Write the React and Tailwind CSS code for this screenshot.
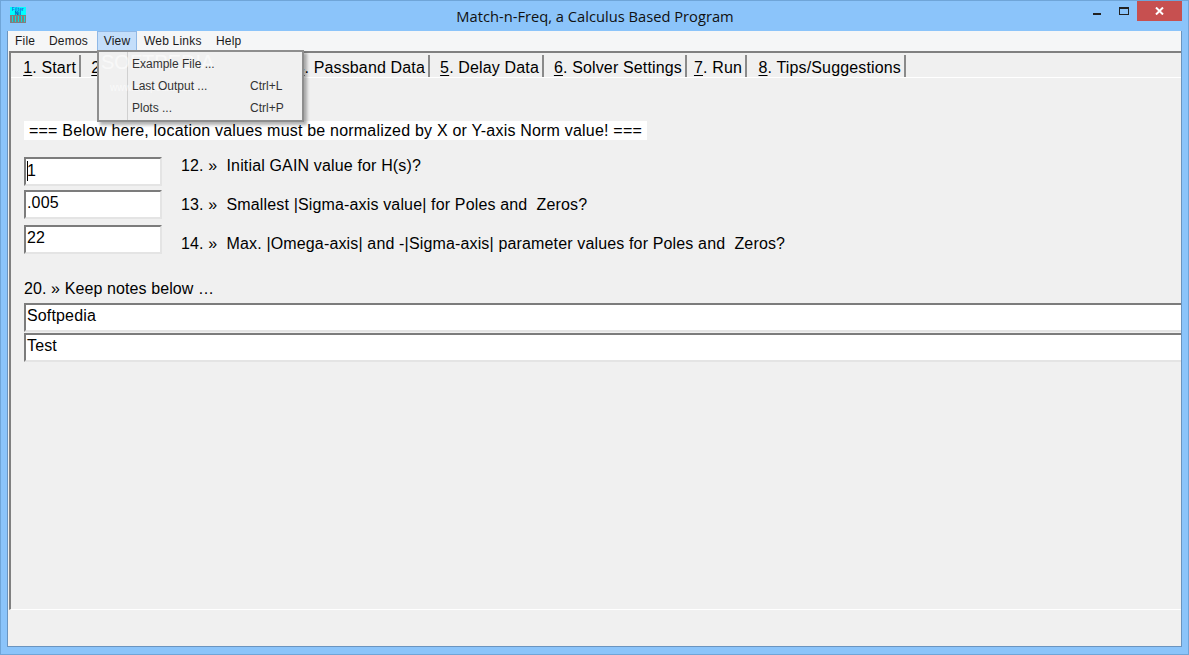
const font = { fontFamily: '"Liberation Sans", Arial, sans-serif' };

const tabs = [
    { num: '1', label: '. Start', width: 'w-[70px]' },
    { num: '2', label: '. Filter', width: 'w-[70px]' },
    { num: '3', label: '. Stopband Data', width: 'w-[132px]' },
    { num: '4', label: '. Passband Data', width: 'w-[147px]' },
    { num: '5', label: '. Delay Data', width: 'w-[114px]' },
    { num: '6', label: '. Solver Settings', width: 'w-[143px]' },
    { num: '7', label: '. Run', width: 'w-[60px]' },
    { num: '8', label: '. Tips/Suggestions', width: 'w-[159px]' },
];

function TabItem({ num, label, width }) {
    return (
        <div className={`${width} h-[22px] flex items-center justify-end pr-[3px] border-r-2 border-r-[#8a8a8a] whitespace-pre`}>
            <span className="mt-[4px]"><span className="underline underline-offset-2">{num}</span>{label}</span>
        </div>
    );
}

function Field({ value, caret, className = '' }) {
    return (
        <div className={`relative border-2 border-t-[#7c7c7c] border-l-[#7c7c7c] border-r-[#e4e4e4] border-b-[#e4e4e4] bg-white pl-[1px] leading-[20px] ${className}`}>
            {caret && <div className="absolute left-[1px] top-[2px] w-[1px] h-[20px] bg-black" />}
            {value}
        </div>
    );
}

function MenuRow({ label, shortcut }) {
    return (
        <div className="h-[22px] flex items-center pl-[33px] text-[12px] text-[#333]">
            <span className="w-[118px]">{label}</span>
            <span>{shortcut}</span>
        </div>
    );
}

function ViewMenu() {
    return (
        <div className="absolute left-0 top-[19px] w-[207px] h-[72px] pt-[1px] bg-[#f0f0f0] border-2 border-[#8e8e8e] shadow-[3px_3px_3px_rgba(0,0,0,0.3)] z-20 tracking-normal">
            <div className="absolute left-[28px] top-0 bottom-0 w-[1px] bg-[#d0d0d0]" />
            <div className="absolute left-[2px] top-0 text-[20px] leading-[20px] text-white/60 whitespace-nowrap">SOFTPEDIA</div>
            <div className="absolute left-[11px] top-[28px] text-[10px] text-white/60 whitespace-nowrap">www.softpedia.com</div>
            <div className="relative">
                <MenuRow label="Example File ..." />
                <MenuRow label="Last Output ..." shortcut="Ctrl+L" />
                <MenuRow label="Plots ..." shortcut="Ctrl+P" />
            </div>
        </div>
    );
}

export default function App() {
    return (
        <div style={font} className="w-[1189px] h-[655px] flex flex-col bg-[#8bc4fa] border border-[#6fa5d8] overflow-hidden text-black text-[16px] tracking-[0.15px]">
            {/* Title bar */}
            <div className="h-[30px] shrink-0 flex items-start">
                <svg className="ml-[9px] mt-[6px]" width="17" height="17" viewBox="0 0 17 17">
                    <rect x="0" y="0" width="16" height="8" fill="#00ffff" />
                    <text x="8" y="4" textAnchor="middle" fontSize="4.5" fontWeight="bold" fill="#2060e0">Filter</text>
                    <text x="8" y="8" textAnchor="middle" fontSize="4.5" fontWeight="bold" fill="#1040b0">Nil</text>
                    <rect x="0" y="8" width="16" height="8" fill="#808080" />
                    <rect x="2" y="9" width="1" height="6" fill="#00e0e0" />
                    <rect x="5" y="9" width="1" height="6" fill="#00e0e0" />
                    <rect x="8" y="9" width="1" height="6" fill="#00e0e0" />
                    <rect x="11" y="9" width="1" height="6" fill="#00e0e0" />
                    <rect x="14" y="9" width="1" height="6" fill="#00e0e0" />
                </svg>
                <div style={{ fontFamily: '"Open Sans", sans-serif' }} className="flex-1 text-center text-[14.7px] tracking-normal leading-[30px] text-[#111] pl-[70px]">
                    Match-n-Freq, a Calculus Based Program
                </div>
                <div className="w-[8px] h-[2px] mt-[12px] bg-[#222]" />
                <div className="w-[10px] h-[8px] mt-[6px] ml-[18px] border border-t-2 border-[#222]" />
                <div className="w-[45px] h-[20px] ml-[8px] mr-[6px] bg-[#c75050] flex items-center justify-center">
                    <svg width="9" height="8" viewBox="0 0 9 8">
                        <path d="M1 0.5 L8 7.5 M8 0.5 L1 7.5" stroke="#fff" strokeWidth="2" fill="none" />
                    </svg>
                </div>
            </div>

            {/* Client area */}
            <div className="flex-1 mx-[6px] mb-[7px] flex flex-col bg-[#f0f0f0] border-l border-b border-r border-[#6a94bf] min-h-0">
                {/* Menu bar */}
                <div className="h-[20px] shrink-0 flex items-center bg-[#f5f6f7] text-[12px] tracking-[0.2px] text-[#1a1a1a]">
                    <span className="ml-[7px] w-[34px]">File</span>
                    <span className="w-[48px]">Demos</span>
                    <div className="relative w-[40px] h-[20px] mr-[7px]">
                        <div className="h-[20px] bg-[#c4defa] border border-[#8fb8e6] flex items-center justify-center">View</div>
                        <ViewMenu />
                    </div>
                    <span className="w-[72px]">Web Links</span>
                    <span>Help</span>
                </div>

                {/* Tab panel */}
                <div className="h-[559px] shrink-0 ml-[1px] border-t-2 border-t-[#808080] border-l-2 border-l-[#808080] border-b border-b-white flex flex-col">
                    <div className="h-[25px] shrink-0 pt-[2px] border-b border-b-white flex items-start">
                        {tabs.map((t) => <TabItem key={t.num} {...t} />)}
                    </div>
                    <div className="pl-[13px]">
                        <div className="mt-[43px] w-[623px] h-[19px] bg-white pl-[5px] leading-[19px] tracking-[0.2px] whitespace-pre">
                            === Below here, location values must be normalized by X or Y-axis Norm value! ===
                        </div>

                        <div className="mt-[17px] flex gap-[19px]">
                            <Field value="1" caret className="w-[138px] h-[29px] pt-[2px]" />
                            <span className="whitespace-pre leading-[18px]">12. »  Initial GAIN value for H(s)?</span>
                        </div>
                        <div className="mt-[4px] flex gap-[19px]">
                            <Field value=".005" className="w-[138px] h-[29px] pt-[1px]" />
                            <span className="whitespace-pre leading-[18px] mt-[6px]">13. »  Smallest |Sigma-axis value| for Poles and  Zeros?</span>
                        </div>
                        <div className="mt-[6px] flex gap-[19px]">
                            <Field value="22" className="w-[138px] h-[29px] pt-[1px]" />
                            <span className="whitespace-pre leading-[18px] mt-[10px]">14. »  Max. |Omega-axis| and -|Sigma-axis| parameter values for Poles and  Zeros?</span>
                        </div>

                        <div className="mt-[26px] leading-[18px] tracking-[0.1px] whitespace-pre">20. » Keep notes below …</div>
                        <Field value="Softpedia" className="mt-[5px] h-[29px] pt-[1px] border-r-0" />
                        <Field value="Test" className="mt-[1px] h-[29px] pt-[1px] border-r-0" />
                    </div>
                </div>
            </div>
        </div>
    );
}
